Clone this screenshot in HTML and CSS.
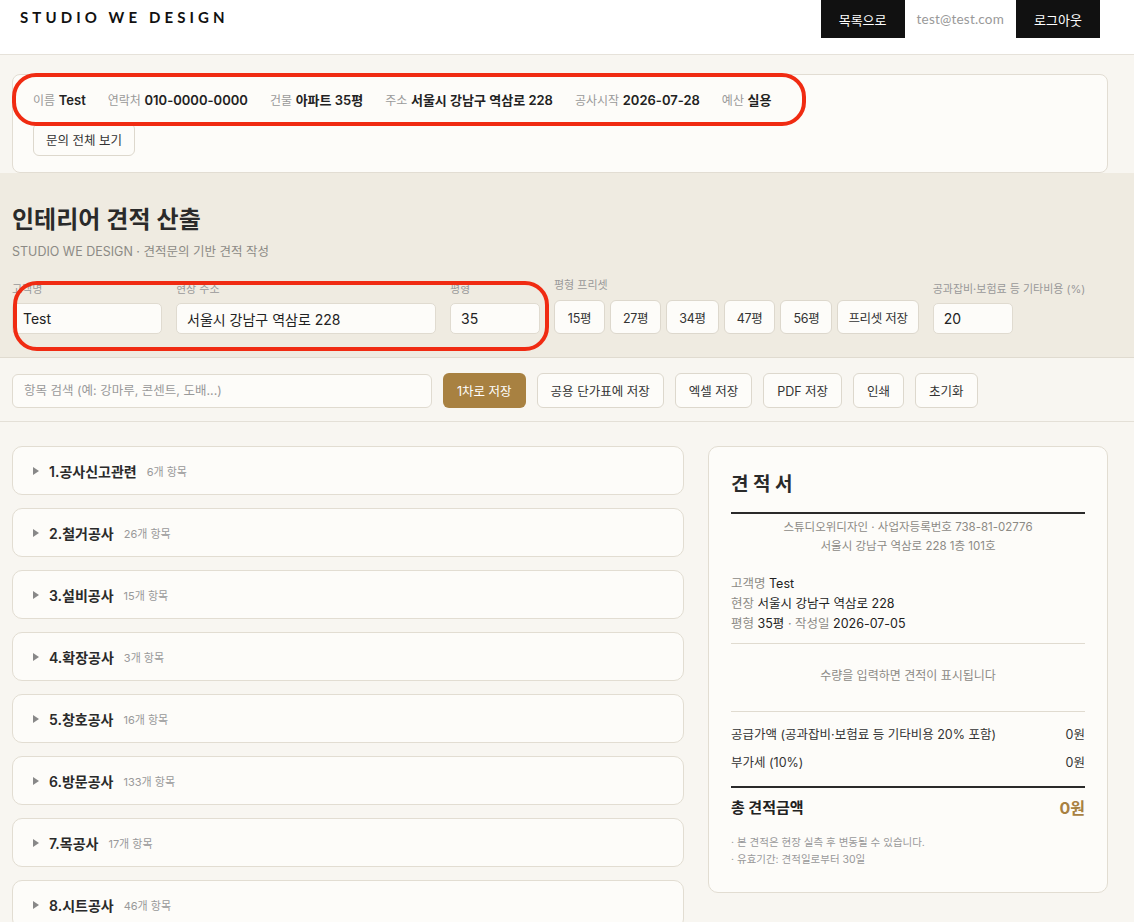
FILE: index.html
```html
<!DOCTYPE html>
<html lang="ko">
<head>
  <meta charset="UTF-8">
  <meta name="viewport" content="width=device-width, initial-scale=1.0">
  <title>인테리어 견적 산출 - STUDIO WE DESIGN</title>
  <link rel="stylesheet" href="styles.css">
</head>
<body>

  <header class="header">
    <div class="logo">STUDIO WE DESIGN</div>
    <div class="header-right">
      <a href="#" class="dark-btn">목록으로</a>
      <span class="user-email">test@test.com</span>
      <a href="#" class="dark-btn">로그아웃</a>
    </div>
  </header>

  <div class="wrap">
    <div class="inquiry-card">
      <div class="inquiry-info">
        <span><em>이름</em> <b>Test</b></span>
        <span><em>연락처</em> <b>010-0000-0000</b></span>
        <span><em>건물</em> <b>아파트 35평</b></span>
        <span><em>주소</em> <b>서울시 강남구 역삼로 228</b></span>
        <span><em>공사시작</em> <b>2026-07-28</b></span>
        <span><em>예산</em> <b>실용</b></span>
      </div>
      <button class="light-btn small">문의 전체 보기</button>
      <div class="mark mark-info"></div>
    </div>
  </div>

  <section class="hero">
    <h1>인테리어 견적 산출</h1>
    <p class="sub">STUDIO WE DESIGN · 견적문의 기반 견적 작성</p>

    <div class="fields">
      <label class="field">
        <span>고객명</span>
        <input type="text" class="w-name" value="Test">
      </label>
      <label class="field">
        <span>현장 주소</span>
        <input type="text" class="w-addr" value="서울시 강남구 역삼로 228">
      </label>
      <label class="field">
        <span>평형</span>
        <input type="text" class="w-size" value="35">
      </label>
      <div class="field presets">
        <span>평형 프리셋</span>
        <div class="preset-row">
          <button class="light-btn preset">15평</button>
          <button class="light-btn preset">27평</button>
          <button class="light-btn preset">34평</button>
          <button class="light-btn preset">47평</button>
          <button class="light-btn preset">56평</button>
          <button class="light-btn preset save">프리셋 저장</button>
        </div>
      </div>
      <label class="field">
        <span>공과잡비·보험료 등 기타비용 (%)</span>
        <input type="text" class="w-rate" value="20">
      </label>
      <div class="mark mark-fields"></div>
    </div>
  </section>

  <div class="toolbar">
    <input type="text" class="search" placeholder="항목 검색 (예: 강마루, 콘센트, 도배...)">
    <button class="gold-btn">1차로 저장</button>
    <button class="light-btn">공용 단가표에 저장</button>
    <button class="light-btn">엑셀 저장</button>
    <button class="light-btn">PDF 저장</button>
    <button class="light-btn">인쇄</button>
    <button class="light-btn">초기화</button>
  </div>

  <main class="content">
    <div class="category-list" id="categories"></div>

    <aside class="quote">
      <h2>견 적 서</h2>
      <div class="company">
        <p>스튜디오위디자인 · 사업자등록번호 738-81-02776</p>
        <p>서울시 강남구 역삼로 228 1층 101호</p>
      </div>
      <div class="client">
        <p><em>고객명</em> Test</p>
        <p><em>현장</em> 서울시 강남구 역삼로 228</p>
        <p><em>평형</em> 35평 <em>· 작성일</em> 2026-07-05</p>
      </div>
      <div class="empty">수량을 입력하면 견적이 표시됩니다</div>
      <div class="sums">
        <div class="sum-row"><span>공급가액 (공과잡비·보험료 등 기타비용 20% 포함)</span><span>0원</span></div>
        <div class="sum-row"><span>부가세 (10%)</span><span>0원</span></div>
      </div>
      <div class="total">
        <span>총 견적금액</span>
        <span class="total-value">0원</span>
      </div>
      <ul class="notes">
        <li>· 본 견적은 현장 실측 후 변동될 수 있습니다.</li>
        <li>· 유효기간: 견적일로부터 30일</li>
      </ul>
    </aside>
  </main>

  <script>
    const categories = [
      { name: '1.공사신고관련', count: 6 },
      { name: '2.철거공사', count: 26 },
      { name: '3.설비공사', count: 15 },
      { name: '4.확장공사', count: 3 },
      { name: '5.창호공사', count: 16 },
      { name: '6.방문공사', count: 133 },
      { name: '7.목공사', count: 17 },
      { name: '8.시트공사', count: 46 }
    ];

    function renderCategories() {
      const list = document.getElementById('categories');
      list.innerHTML = '';
      categories.forEach(cat => {
        const el = document.createElement('div');
        el.classList.add('category');
        el.innerHTML = `
          <span class="arrow"></span>
          <span class="cat-name">${cat.name}</span>
          <span class="cat-count">${cat.count}개 항목</span>
        `;
        list.appendChild(el);
      });
    }

    renderCategories();
  </script>
</body>
</html>
```

FILE: styles.css
```css
body {
  font-family: Inter, "Noto Sans CJK KR", sans-serif;
  background-color: #f8f6f1;
  color: #222;
  margin: 0;
  padding: 0;
  font-size: 13px;
}

em {
  font-style: normal;
}

button {
  font-family: inherit;
  cursor: pointer;
}

/* Header */
.header {
  background-color: #fff;
  border-bottom: 1px solid #e6e2da;
  height: 54px;
  display: flex;
  justify-content: space-between;
  align-items: flex-start;
  padding: 0 34px 0 20px;
}

.logo {
  font-family: Lato, sans-serif;
  font-weight: 700;
  font-size: 15px;
  letter-spacing: 4.1px;
  line-height: 35px;
  color: #111;
}

.header-right {
  display: flex;
  align-items: center;
  gap: 12px;
}

.dark-btn {
  display: inline-flex;
  align-items: center;
  justify-content: center;
  width: 84px;
  height: 38px;
  background-color: #111;
  color: #fff;
  text-decoration: none;
  font-size: 13px;
}

.user-email {
  font-family: Lato, sans-serif;
  color: #999;
  font-size: 13.5px;
  letter-spacing: 0.2px;
}

/* Inquiry summary */
.wrap {
  padding: 19px 26px 0 12px;
}

.inquiry-card {
  position: relative;
  background-color: #fdfcf9;
  border: 1px solid #e2ddd3;
  border-radius: 8px;
  padding: 15px 20px 16px;
}

.inquiry-info {
  display: flex;
  gap: 22px;
  line-height: 20px;
  margin-bottom: 12px;
}

.inquiry-info em {
  color: #9a9a9a;
  font-size: 12px;
}

.inquiry-info b {
  font-weight: 600;
  font-size: 13px;
  color: #222;
}

.light-btn {
  height: 35px;
  padding: 0 13px;
  background-color: #fdfcf9;
  border: 1px solid #ddd8cd;
  border-radius: 6px;
  font-size: 12.5px;
  color: #333;
}

.light-btn.small {
  height: 33px;
  padding: 0 12px;
}

/* annotation outlines */
.mark {
  position: absolute;
  border: 4px solid #f02b12;
  border-radius: 24px;
  pointer-events: none;
}

.mark-info {
  left: -1px;
  top: -2px;
  width: 786px;
  height: 45px;
}

.mark-fields {
  left: 1px;
  top: 3px;
  width: 528px;
  height: 62px;
}

/* Estimate header section */
.hero {
  background-color: #efebe1;
  border-bottom: 1px solid #e0dbd0;
  padding: 30px 26px 23px 12px;
}

.hero h1 {
  margin: 0;
  font-size: 24px;
  font-weight: 600;
  line-height: 34px;
  color: #2a2a2a;
}

.hero .sub {
  margin: 6px 0 0;
  font-size: 12.5px;
  line-height: 18px;
  color: #8c8a85;
}

.fields {
  position: relative;
  display: flex;
  align-items: flex-end;
  gap: 14px;
  margin-top: 17px;
}

.field {
  display: flex;
  flex-direction: column;
  gap: 7px;
}

.field > span {
  font-size: 11px;
  line-height: 14px;
  color: #999;
}

.field input {
  box-sizing: border-box;
  height: 31px;
  padding: 0 10px;
  background-color: #fdfcf9;
  border: 1px solid #e0dbd0;
  border-radius: 5px;
  font-family: inherit;
  font-size: 14px;
  color: #222;
}

.w-name { width: 150px; }
.w-addr { width: 260px; }
.w-size { width: 90px; }
.w-rate { width: 80px; }

.presets {
  gap: 8px;
}

.preset-row {
  display: flex;
  gap: 5px;
}

.preset {
  height: 34px;
  min-width: 51px;
  padding: 0 12px;
  font-size: 12.5px;
  letter-spacing: -0.3px;
}

.preset.save {
  padding: 0 10px;
}

/* Toolbar */
.toolbar {
  display: flex;
  align-items: center;
  gap: 11px;
  padding: 15px 12px 13px;
  border-bottom: 1px solid #e4e0d7;
}

.search {
  box-sizing: border-box;
  width: 420px;
  height: 34px;
  padding: 0 11px;
  background-color: #fdfcf9;
  border: 1px solid #e0dbd0;
  border-radius: 6px;
  font-family: inherit;
  font-size: 12.5px;
}

.search::placeholder {
  color: #999;
}

.gold-btn {
  height: 35px;
  padding: 0 14px;
  background-color: #a88141;
  color: #fff;
  border: none;
  border-radius: 6px;
  font-size: 12.5px;
}

/* Main content */
.content {
  display: flex;
  align-items: flex-start;
  gap: 24px;
  padding: 24px 26px 0 12px;
}

.category-list {
  flex: 1;
  display: flex;
  flex-direction: column;
  gap: 13px;
}

.category {
  height: 47px;
  display: flex;
  align-items: center;
  padding: 0 20px;
  background-color: #fdfcf9;
  border: 1px solid #e2ddd2;
  border-radius: 10px;
}

.arrow {
  width: 0;
  height: 0;
  border-top: 4px solid transparent;
  border-bottom: 4px solid transparent;
  border-left: 6px solid #888;
  margin-right: 10px;
}

.cat-name {
  font-size: 14px;
  font-weight: 600;
  color: #2a2a2a;
}

.cat-count {
  margin-left: 10px;
  font-size: 11px;
  color: #999;
}

/* Quote panel */
.quote {
  width: 354px;
  padding: 23px 22px 24px;
  background-color: #fdfcf9;
  border: 1px solid #e2ddd2;
  border-radius: 10px;
}

.quote h2 {
  margin: 0 0 12px;
  font-size: 19px;
  font-weight: 700;
  line-height: 30px;
  color: #2a2a2a;
}

.company {
  border-top: 2px solid #2a2a2a;
  padding-top: 4px;
  text-align: center;
  font-size: 11.5px;
  line-height: 19px;
  color: #8c8a85;
}

.quote p {
  margin: 0;
}

.client {
  margin-top: 18px;
  padding-bottom: 9px;
  border-bottom: 1px solid #e0dbd0;
  font-size: 12.5px;
  line-height: 20px;
  color: #222;
}

.client em {
  color: #8c8a85;
}

.empty {
  padding: 22px 0 25px;
  text-align: center;
  font-size: 12px;
  line-height: 20px;
  color: #8c8a85;
  border-bottom: 1px solid #e0dbd0;
}

.sums {
  padding: 13px 0 5px;
  border-bottom: 2px solid #2a2a2a;
}

.sum-row {
  display: flex;
  justify-content: space-between;
  font-size: 12.5px;
  line-height: 20px;
  margin-bottom: 8px;
  color: #333;
}

.total {
  display: flex;
  justify-content: space-between;
  align-items: center;
  padding-top: 9px;
  line-height: 22px;
  font-size: 15px;
  font-weight: 700;
  color: #222;
}

.total-value {
  color: #a88141;
  font-size: 16px;
}

.notes {
  list-style: none;
  margin: 15px 0 0;
  padding: 0;
  font-size: 10.5px;
  line-height: 17px;
  color: #999;
}
```
